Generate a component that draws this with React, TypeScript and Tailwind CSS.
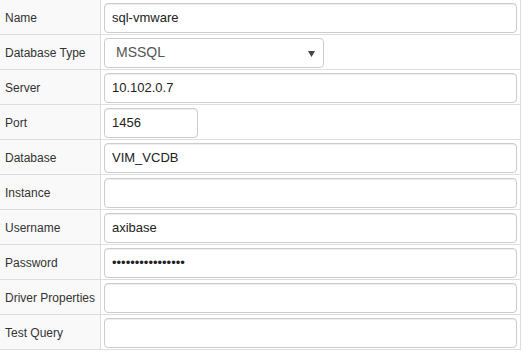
type Field = {
  label: string
  value?: string
  kind?: "text" | "password" | "select"
  width?: string
}

const fields: Field[] = [
  { label: "Name", value: "sql-vmware" },
  { label: "Database Type", value: "MSSQL", kind: "select" },
  { label: "Server", value: "10.102.0.7" },
  { label: "Port", value: "1456", width: "w-[94px]" },
  { label: "Database", value: "VIM_VCDB" },
  { label: "Instance", value: "" },
  { label: "Username", value: "axibase" },
  { label: "Password", value: "abcdefghijklmnop", kind: "password" },
  { label: "Driver Properties", value: "" },
  { label: "Test Query", value: "" },
]

function Select({ value }: { value: string }) {
  return (
    <div className="relative flex h-[30px] w-[220px] items-center rounded-[4px] border border-[#cccccc] bg-white pl-[11px] text-[14px] text-[#555555]">
      {value}
      {/* small filled caret */}
      <svg className="absolute right-[8px] top-[12px]" width="7" height="6" viewBox="0 0 7 6">
        <path d="M0 0h7L3.5 6z" fill="#444" />
      </svg>
    </div>
  )
}

export default function App() {
  return (
    <div className="h-[352px] w-[524px] bg-white font-['Liberation_Sans',Arial,sans-serif]">
      <div className="w-[521px] border-r border-[#dddddd]">
        {fields.map((f) => (
          <div key={f.label} className="flex h-[35px] border-b border-[#dddddd]">
            <div className="flex w-[101px] shrink-0 items-center border-r border-[#dddddd] bg-[#f9f9f9] pl-[5px] pt-[1px] text-[12px] text-[#333333]">
              {f.label}
            </div>
            <div className="flex flex-1 items-center px-[3px] pt-[1px]">
              {f.kind === "select" ? (
                <Select value={f.value ?? ""} />
              ) : (
                <input
                  type={f.kind === "password" ? "password" : "text"}
                  readOnly
                  defaultValue={f.value}
                  className={`h-[30px] ${f.width ?? "w-full"} rounded-[4px] border border-[#cccccc] bg-white px-[7px] text-[13px] text-[#222222] shadow-[inset_0_1px_1px_rgba(0,0,0,0.075)] outline-none`}
                />
              )}
            </div>
          </div>
        ))}
      </div>
    </div>
  )
}
